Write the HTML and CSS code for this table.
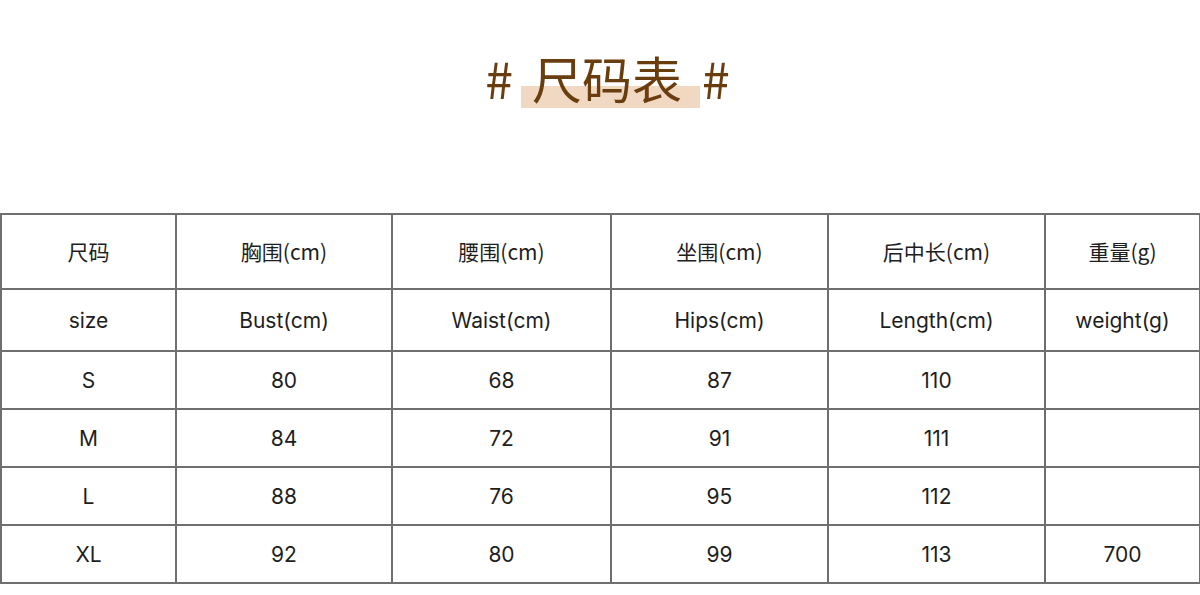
FILE: index.html
```html
<!DOCTYPE html>
<html lang="zh">
<head>
<meta charset="utf-8">
<link rel="stylesheet" href="styles.css">
</head>
<body>
<header class="title">
  <span class="hash hash-left">#</span>
  <span class="title-text">尺码表</span>
  <span class="hash hash-right">#</span>
</header>
<table class="size-table">
  <colgroup>
    <col class="c1"><col class="c2"><col class="c3"><col class="c4"><col class="c5"><col class="c6">
  </colgroup>
  <tr class="row-head"><td>尺码</td><td>胸围(cm)</td><td>腰围(cm)</td><td>坐围(cm)</td><td>后中长(cm)</td><td>重量(g)</td></tr>
  <tr class="row-sub"><td>size</td><td>Bust(cm)</td><td>Waist(cm)</td><td>Hips(cm)</td><td>Length(cm)</td><td>weight(g)</td></tr>
  <tr><td>S</td><td>80</td><td>68</td><td>87</td><td>110</td><td></td></tr>
  <tr><td>M</td><td>84</td><td>72</td><td>91</td><td>111</td><td></td></tr>
  <tr><td>L</td><td>88</td><td>76</td><td>95</td><td>112</td><td></td></tr>
  <tr><td>XL</td><td>92</td><td>80</td><td>99</td><td>113</td><td>700</td></tr>
</table>
</body>
</html>
```
FILE: styles.css
```css
html, body {
  margin: 0;
  padding: 0;
  background: #ffffff;
}
body {
  width: 1200px;
  font-family: "Inter", "Noto Sans CJK SC", sans-serif;
}
.title {
  display: flex;
  justify-content: center;
  align-items: flex-start;
  height: 213px;
  box-sizing: border-box;
  padding: 46px 0 0 15px;
  color: #6a3d0f;
  font-family: "Noto Sans CJK SC", sans-serif;
  font-weight: 400;
}
.hash {
  font-size: 50px;
  line-height: 62px;
}
.hash-left { margin-right: 8px; }
.hash-right { margin-left: 2px; }
.title-text {
  font-size: 50px;
  line-height: 62px;
  padding: 0 18px 0 11px;
  background: linear-gradient(to bottom, transparent 0, transparent 40px, #f0d8c2 40px, #f0d8c2 62px, transparent 62px);
}
.size-table {
  border-collapse: collapse;
  width: 1199px;
  table-layout: fixed;
  font-size: 21px;
  color: #1e1e1e;
  text-align: center;
}
.size-table td {
  border: 2px solid #6f6f6f;
  padding: 0;
  height: 56px;
}
.row-head td { height: 71px; padding-bottom: 2px; font-family: "Noto Sans CJK SC", "Inter", sans-serif; }
.row-sub td { height: 60px; }
.c1 { width: 175px; }
.c2 { width: 216px; }
.c3 { width: 219px; }
.c4 { width: 217px; }
.c5 { width: 217px; }
.c6 { width: 155px; }
```
